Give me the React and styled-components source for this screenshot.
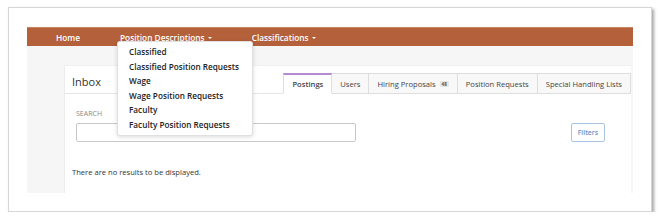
import React from 'react';
import styled, { createGlobalStyle } from 'styled-components';

const GlobalStyle = createGlobalStyle`
  * { box-sizing: border-box; }
  body {
    margin: 0;
    background: #ffffff;
    font-family: "Open Sans", "Liberation Sans", sans-serif;
  }
`;

const Frame = styled.div`
  margin: 7px 0 0 8px;
  width: 644px;
  height: 205px;
  padding: 19px 18px 0 18px;
  background: #fff;
  border: 1px solid #d6d6d6;
  box-shadow: 2px 2px 3px rgba(0, 0, 0, 0.35);
`;

const NavBar = styled.nav`
  display: flex;
  align-items: center;
  gap: 40px;
  height: 19px;
  padding-left: 29px;
  background: #b4603b;
  border-top: 1px solid #c98462;
`;

const NavItem = styled.div`
  position: relative;
  display: flex;
  align-items: center;
  gap: 3px;
  height: 18px;
  color: #fff;
  font-size: 8.3px;
  font-weight: 600;
`;

const Caret = styled.span`
  width: 0;
  height: 0;
  border-left: 2px solid transparent;
  border-right: 2px solid transparent;
  border-top: 2px solid #fff;
  margin-top: 1px;
`;

const Dropdown = styled.ul`
  position: absolute;
  top: 13px;
  left: -3px;
  z-index: 5;
  width: 136px;
  margin: 0;
  padding: 3px 0 3px 11px;
  list-style: none;
  background: #fff;
  border: 1px solid rgba(0, 0, 0, 0.12);
  border-radius: 3px;
  box-shadow: 0 1px 4px rgba(0, 0, 0, 0.15);
`;

const DropdownItem = styled.li`
  color: #222;
  font-size: 8.2px;
  font-weight: 600;
  line-height: 14.5px;
  white-space: nowrap;
`;

const Workspace = styled.div`
  height: 147px;
  padding: 19px 2px 0 37px;
  background: #f6f6f6;
`;

const Panel = styled.section`
  height: 128px;
  background: #fff;
  border-left: 1px solid #ececec;
  border-top: 1px solid #f0f0f0;
`;

const PanelHeader = styled.div`
  display: flex;
  align-items: flex-end;
  justify-content: space-between;
  padding: 7px 0 0 7px;
  border-bottom: 1px solid #e6e6e6;
`;

const Title = styled.h2`
  margin: 0 0 4px;
  color: #333;
  font-size: 11px;
  font-weight: 400;
`;

const Tabs = styled.div`
  display: flex;
`;

const Tab = styled.div`
  display: flex;
  align-items: center;
  gap: 4px;
  height: 21px;
  padding: 0 8px;
  margin-bottom: -1px;
  color: #444;
  font-size: 7.6px;
  font-weight: ${(p) => (p.$active ? 600 : 500)};
  background: ${(p) => (p.$active ? '#fff' : '#f8f8f8')};
  border: 1px solid #dedede;
  border-left-width: ${(p) => (p.$first ? '1px' : '0')};
  border-top: ${(p) => (p.$active ? '2px solid #b58bd0' : '1px solid #dedede')};
  border-bottom-color: ${(p) => (p.$active ? '#fff' : '#dedede')};
`;

const Badge = styled.span`
  padding: 0 2px;
  background: #e6e6e6;
  color: #555;
  font-size: 4.5px;
  font-weight: 700;
  line-height: 6px;
  border-radius: 1px;
`;

const Body = styled.div`
  padding: 0 26px 0 11px;
`;

const SearchRow = styled.div`
  display: flex;
  align-items: flex-end;
  justify-content: space-between;
  margin-top: 16px;
`;

const SearchField = styled.div`
  display: flex;
  flex-direction: column;
  gap: 5px;
`;

const Label = styled.label`
  color: #888;
  font-size: 7px;
  line-height: 8px;
`;

const Input = styled.input`
  width: 280px;
  height: 19px;
  border: 1px solid #c8c8c8;
  border-radius: 2px;
  background: #fff;
`;

const FiltersButton = styled.button`
  height: 19px;
  padding: 0 6px;
  border: 1px solid #a9c3e3;
  border-radius: 2px;
  background: #fff;
  color: #6c90c2;
  font-family: inherit;
  font-size: 6.8px;
  font-weight: 600;
`;

const Message = styled.p`
  margin: 24px 0 0 -4px;
  color: #333;
  font-size: 7.6px;
  line-height: 12px;
`;

const menuItems = [
  'Classified',
  'Classified Position Requests',
  'Wage',
  'Wage Position Requests',
  'Faculty',
  'Faculty Position Requests',
];

const tabs = [
  { label: 'Postings', active: true },
  { label: 'Users' },
  { label: 'Hiring Proposals', badge: '48' },
  { label: 'Position Requests' },
  { label: 'Special Handling Lists' },
];

const App = () => {
  return (
    <>
      <GlobalStyle />
      <Frame>
        <NavBar>
          <NavItem>Home</NavItem>
          <NavItem>
            Position Descriptions <Caret />
            <Dropdown>
              {menuItems.map((item) => (
                <DropdownItem key={item}>{item}</DropdownItem>
              ))}
            </Dropdown>
          </NavItem>
          <NavItem>
            Classifications <Caret />
          </NavItem>
        </NavBar>
        <Workspace>
          <Panel>
            <PanelHeader>
              <Title>Inbox</Title>
              <Tabs>
                {tabs.map((tab, i) => (
                  <Tab key={tab.label} $active={tab.active} $first={i === 0}>
                    {tab.label}
                    {tab.badge && <Badge>{tab.badge}</Badge>}
                  </Tab>
                ))}
              </Tabs>
            </PanelHeader>
            <Body>
              <SearchRow>
                <SearchField>
                  <Label>SEARCH</Label>
                  <Input />
                </SearchField>
                <FiltersButton>Filters</FiltersButton>
              </SearchRow>
              <Message>There are no results to be displayed.</Message>
            </Body>
          </Panel>
        </Workspace>
      </Frame>
    </>
  );
};

export default App;
